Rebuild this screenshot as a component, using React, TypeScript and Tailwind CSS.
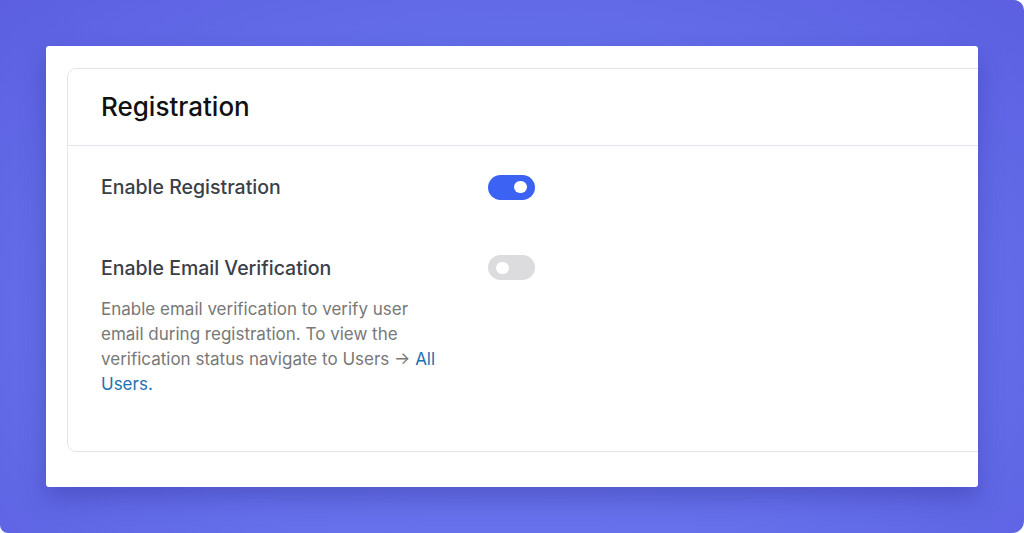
import React from "react";

function Toggle({ on }: { on: boolean }) {
  return (
    <div
      className={
        "flex h-[25px] w-[47px] items-center rounded-full px-[8px] " +
        (on ? "justify-end bg-[#3b62f2]" : "justify-start bg-[#dcdcde]")
      }
    >
      <div className="h-[12px] w-[13px] rounded-full bg-white" />
    </div>
  );
}

export default function App() {
  return (
    <div
      className="h-[533px] w-[1024px] overflow-hidden rounded-tr-[10px] rounded-br-[12px] rounded-bl-[8px] px-[46px] pt-[46px]"
      style={{ fontFamily: "Inter, 'Noto Sans', sans-serif", background: "radial-gradient(ellipse at 50% 60%, #6c78f0 0%, #6670eb 55%, #5b5fe0 100%)" }}
    >
      <div className="h-[441px] overflow-hidden rounded-[3px] bg-white pl-[21px] pt-[22px] shadow-[0_12px_24px_rgba(40,40,140,0.35)]">
        <div className="w-[1000px] rounded-[9px] border border-[#e4e4ee] bg-white">
          <div className="flex h-[77px] items-center border-b border-[#e4e4ee] pl-[33px]">
            <h1 className="text-[26px] font-medium leading-none text-[#111111]">Registration</h1>
          </div>
          <div className="pl-[33px] pt-[28px] pb-[54px]">
            <div className="grid grid-cols-[387px_1fr] items-center">
              <div className="text-[19.5px] font-medium leading-[26px] text-[#3a4048]">Enable Registration</div>
              <div><Toggle on={true} /></div>
            </div>
            <div className="mt-[55px] grid grid-cols-[387px_1fr] items-start">
              <div>
                <div className="text-[19.5px] font-medium leading-[26px] text-[#3a4048]">Enable Email Verification</div>
                <p className="mt-[16px] w-[345px] text-[17px] leading-[25px] text-[#787878]">
                  Enable email verification to verify user email during registration. To view the verification status navigate to Users → <a className="text-[#2271b1]">All Users.</a>
                </p>
              </div>
              <div><Toggle on={false} /></div>
            </div>
          </div>
        </div>
      </div>
    </div>
  );
}
